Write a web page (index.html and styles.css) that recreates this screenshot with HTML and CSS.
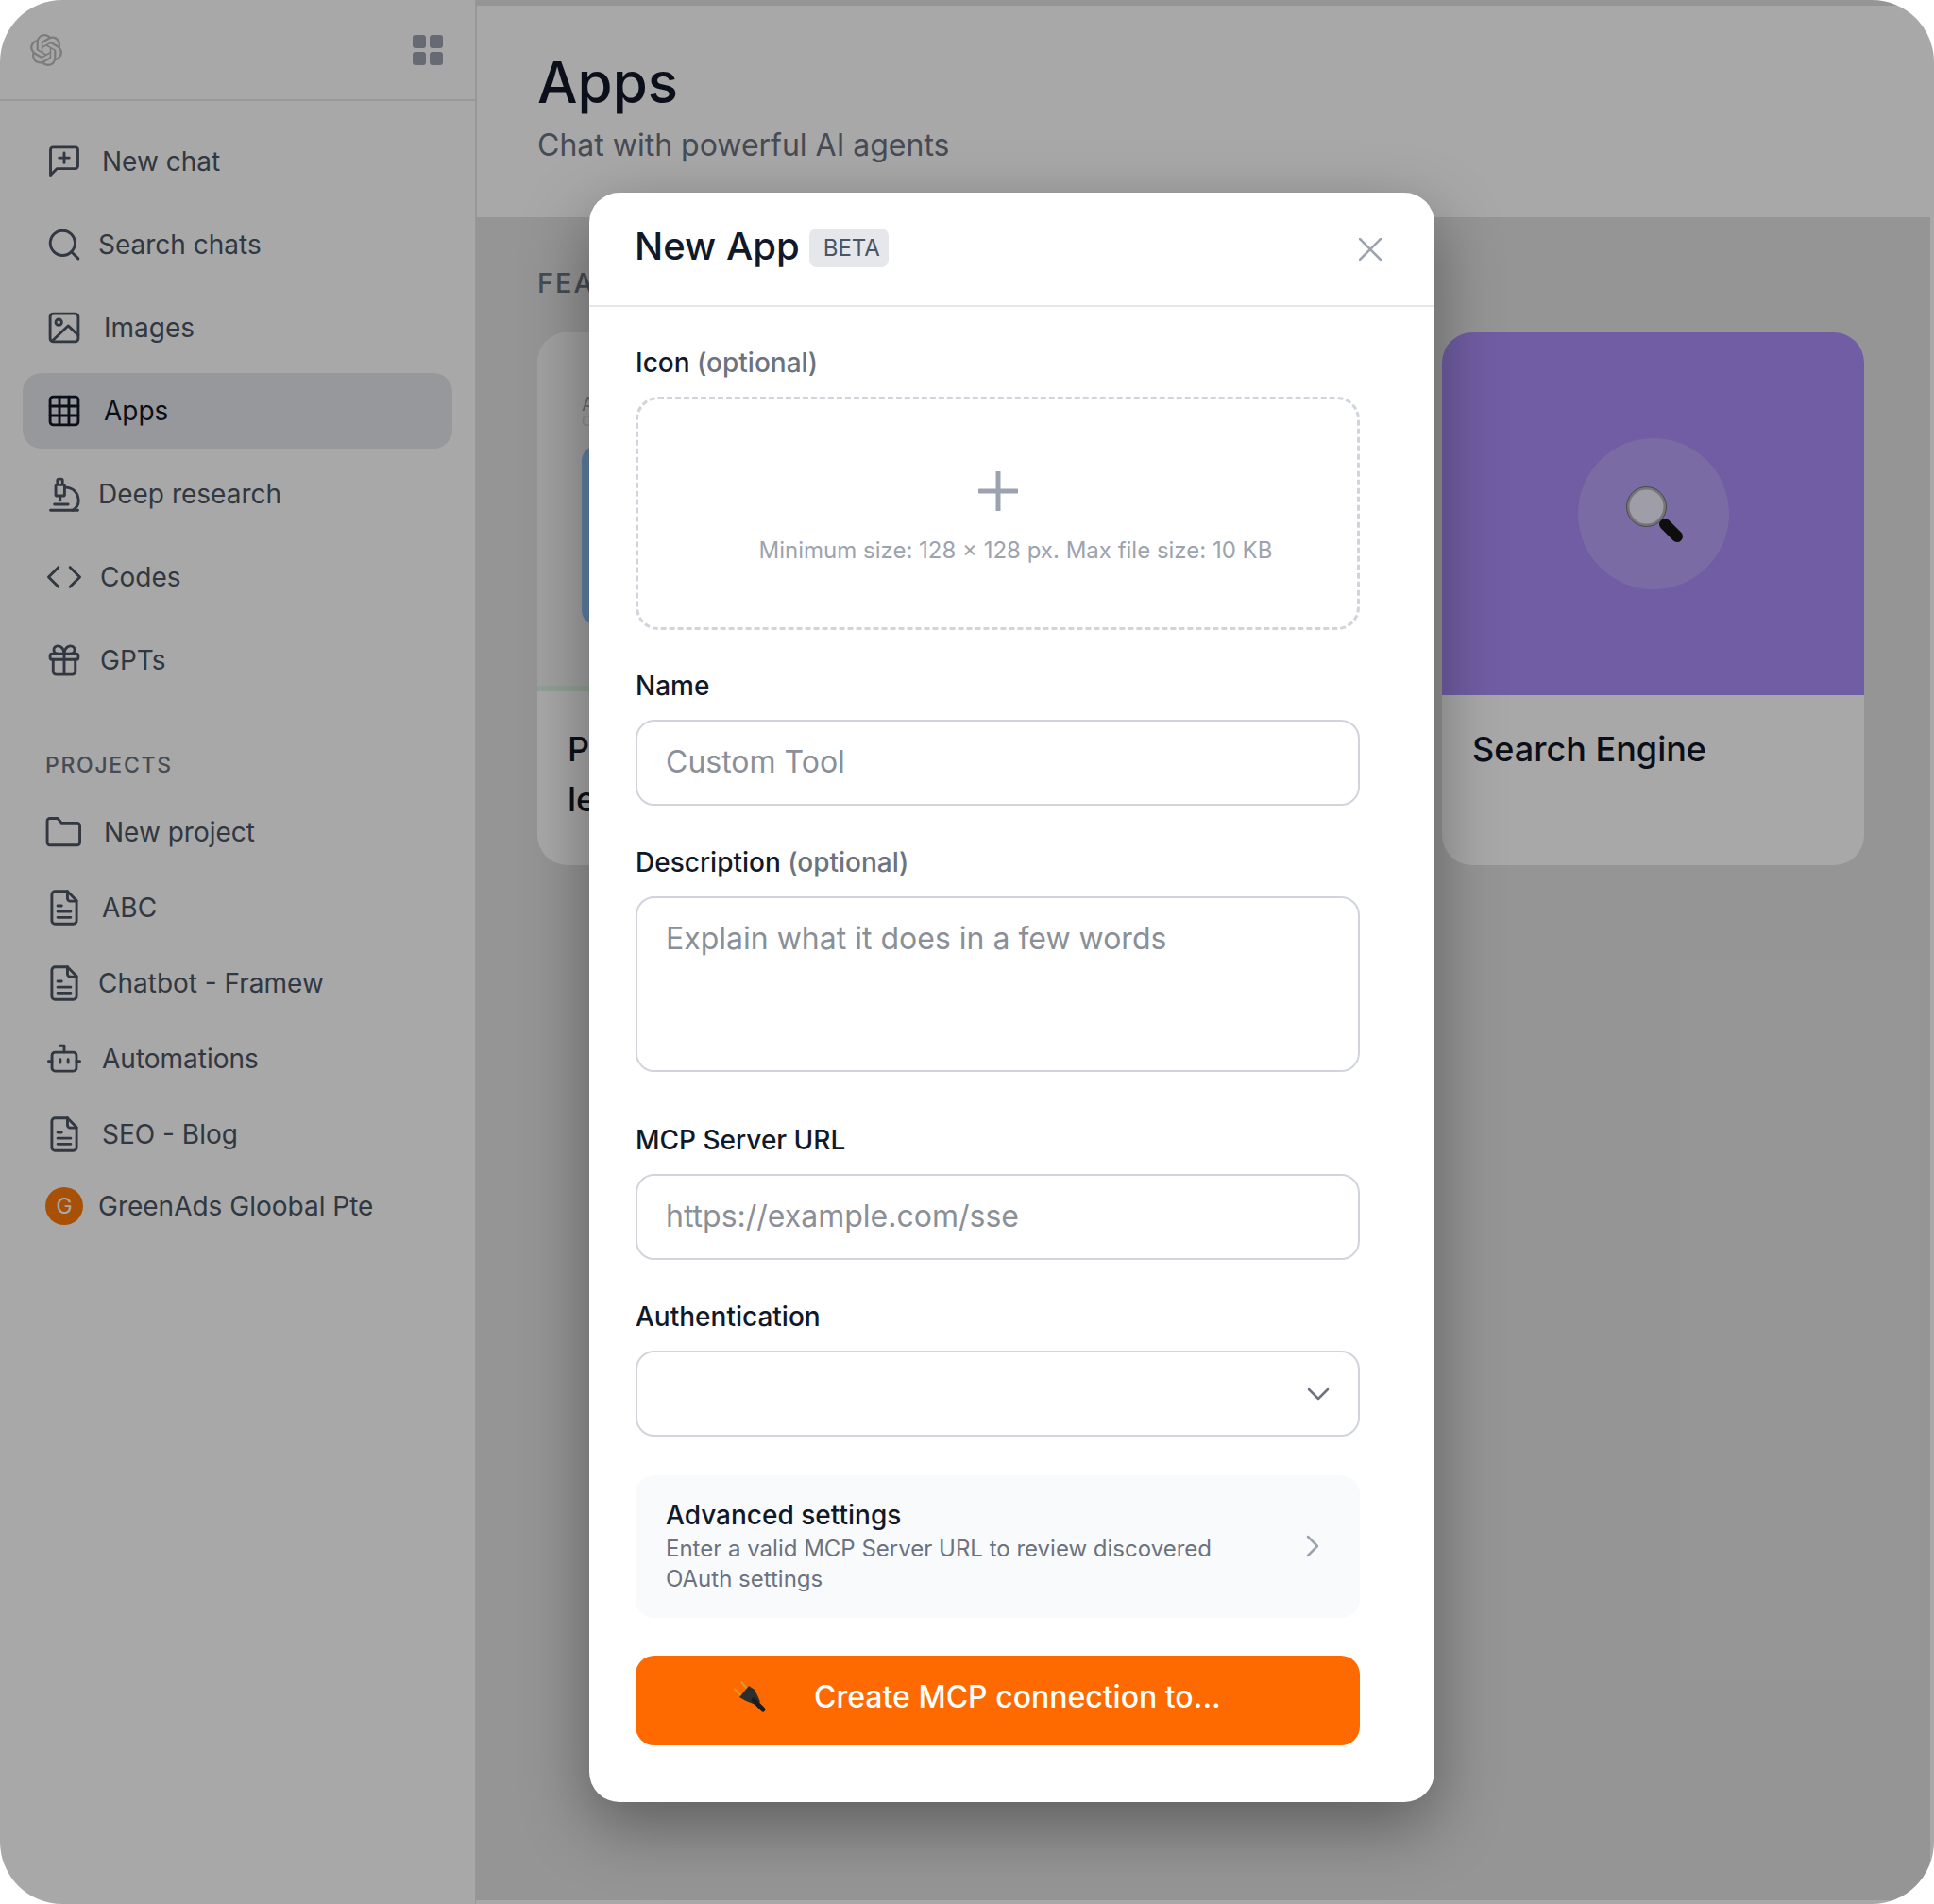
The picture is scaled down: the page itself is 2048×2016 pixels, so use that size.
FILE: index.html
```html
<!DOCTYPE html>
<html lang="en">
<head>
  <meta charset="UTF-8">
  <title>Apps</title>
  <link rel="stylesheet" href="styles.css">
</head>
<body>
  <div class="window">
    <aside class="sidebar">
      <div class="sidebar-head">
        <svg class="logo" viewBox="0 0 24 24"><path d="M22.282 9.821a5.985 5.985 0 0 0-.516-4.91 6.046 6.046 0 0 0-6.51-2.9A6.065 6.065 0 0 0 4.981 4.18a5.985 5.985 0 0 0-3.998 2.9 6.046 6.046 0 0 0 .743 7.097 5.98 5.98 0 0 0 .51 4.911 6.051 6.051 0 0 0 6.515 2.9A5.985 5.985 0 0 0 13.26 24a6.056 6.056 0 0 0 5.772-4.206 5.99 5.99 0 0 0 3.997-2.9 6.056 6.056 0 0 0-.747-7.073zM13.26 22.43a4.476 4.476 0 0 1-2.876-1.04l.141-.081 4.779-2.758a.795.795 0 0 0 .392-.681v-6.737l2.02 1.168a.071.071 0 0 1 .038.052v5.583a4.504 4.504 0 0 1-4.494 4.494zM3.6 18.304a4.47 4.47 0 0 1-.535-3.014l.142.085 4.783 2.759a.771.771 0 0 0 .78 0l5.843-3.369v2.332a.08.08 0 0 1-.033.062L9.74 19.95a4.5 4.5 0 0 1-6.14-1.646zM2.34 7.896a4.485 4.485 0 0 1 2.366-1.973V11.6a.766.766 0 0 0 .388.676l5.815 3.355-2.02 1.168a.076.076 0 0 1-.071 0l-4.83-2.786A4.504 4.504 0 0 1 2.34 7.872zm16.597 3.855l-5.833-3.387L15.119 7.2a.076.076 0 0 1 .071 0l4.83 2.791a4.494 4.494 0 0 1-.676 8.105v-5.678a.79.79 0 0 0-.407-.667zm2.01-3.023l-.141-.085-4.774-2.782a.776.776 0 0 0-.785 0L9.409 9.23V6.897a.066.066 0 0 1 .028-.061l4.83-2.787a4.5 4.5 0 0 1 6.68 4.66zm-12.64 4.135l-2.02-1.164a.08.08 0 0 1-.038-.057V6.075a4.5 4.5 0 0 1 7.375-3.453l-.142.08L8.704 5.46a.795.795 0 0 0-.393.681zm1.097-2.365l2.602-1.5 2.607 1.5v2.999l-2.597 1.5-2.607-1.5z"/></svg>
        <div class="layout-btn"><span></span><span></span><span></span><span></span></div>
      </div>

      <nav class="nav">
        <a class="nav-item">
          <svg class="icon" viewBox="-2.5 -2.5 29 29"><path d="M3.500 1h17a2 2 0 0 1 2 2v12.500a2 2 0 0 1-2 2H6.500l-5 5V3a2 2 0 0 1 2-2z"/><path d="M12 5.500v7.500M8.200 9.200h7.600"/></svg>
          <span class="label label-near">New chat</span>
        </a>
        <a class="nav-item">
          <svg class="icon" viewBox="-2.5 -2.5 29 29"><circle cx="10.8" cy="10.8" r="9.5"/><path d="M17.6 17.6l5.200 5.200"/></svg>
          <span class="label">Search chats</span>
        </a>
        <a class="nav-item">
          <svg class="icon" viewBox="-2.5 -2.5 29 29"><rect x="1.200" y="1.200" width="21.600" height="21.600" rx="2.500"/><circle cx="7.800" cy="7.800" r="2.300"/><path d="M3 22l12-11.500 7.800 7.200"/></svg>
          <span class="label label-wide">Images</span>
        </a>
        <a class="nav-item active">
          <svg class="icon" viewBox="-2.5 -2.5 29 29"><rect x="1.200" y="1.200" width="21.600" height="21.600" rx="2.500"/><path d="M1.200 8.400h21.600M1.200 15.600h21.600M8.400 1.200v21.600M15.600 1.200v21.600"/></svg>
          <span class="label label-wide">Apps</span>
        </a>
        <a class="nav-item">
          <svg class="icon" viewBox="-2.5 -2.5 29 29"><path d="M1.500 24.500h21M4.500 20h10.500"/><path d="M7.800.5h1.900a1 1 0 0 1 1 1V5H6.800V1.500a1 1 0 0 1 1-1zM6.500 5h4.800a1 1 0 0 1 1 1v6.500a1 1 0 0 1-1 1H6.500a1 1 0 0 1-1-1V6a1 1 0 0 1 1-1zM8.900 13.500V17"/><path d="M13 7c6 0 10 4.500 10 10.500 0 3-2 5.500-4.500 7"/></svg>
          <span class="label">Deep research</span>
        </a>
        <a class="nav-item">
          <svg class="icon" viewBox="-2.5 -2.5 29 29"><path d="M7.500 4.500L0 12l7.500 7.500M16.500 4.500L24 12l-7.500 7.500"/></svg>
          <span class="label label-mid">Codes</span>
        </a>
        <a class="nav-item">
          <svg class="icon" viewBox="-2.5 -2.5 29 29"><rect x="1.200" y="7" width="21.600" height="4.500" rx="1.500"/><path d="M12 7v16M20.500 11.500V20.500a2.500 2.500 0 0 1-2.500 2.500H6a2.500 2.500 0 0 1-2.500-2.500V11.500"/><path d="M7 7a3 3 0 0 1 0-6c3 0 5 3 5 6 0-3 2-6 5-6a3 3 0 0 1 0 6"/></svg>
          <span class="label label-mid">GPTs</span>
        </a>
      </nav>

      <div class="section-title">PROJECTS</div>

      <nav class="projects">
        <a class="nav-item">
          <svg class="icon" viewBox="-2.5 -2.5 29 29"><path d="M-1 3.500a2 2 0 0 1 2-2h6l3 3.500h12a2 2 0 0 1 2 2v13a2 2 0 0 1-2 2H1a2 2 0 0 1-2-2z"/></svg>
          <span class="label label-wide">New project</span>
        </a>
        <a class="nav-item">
          <svg class="icon" viewBox="-2.5 -2.500 29 29"><path d="M5-.5h9.500l7 7v15.500a2.500 2.500 0 0 1-2.500 2.500H5a2.500 2.500 0 0 1-2.500-2.500V2a2.500 2.500 0 0 1 2.500-2.500z"/><path d="M14.500-.5V5a2 2 0 0 0 2 2h5M7 10.500h3M7 15h10M7 19.500h10"/></svg>
          <span class="label label-near">ABC</span>
        </a>
        <a class="nav-item">
          <svg class="icon" viewBox="-2.5 -2.500 29 29"><path d="M5-.5h9.500l7 7v15.500a2.500 2.500 0 0 1-2.500 2.500H5a2.500 2.500 0 0 1-2.500-2.500V2a2.500 2.500 0 0 1 2.500-2.500z"/><path d="M14.500-.5V5a2 2 0 0 0 2 2h5M7 10.500h3M7 15h10M7 19.500h10"/></svg>
          <span class="label">Chatbot - Framew</span>
        </a>
        <a class="nav-item">
          <svg class="icon" viewBox="-2.5 -2.5 29 29"><rect x="2.600" y="7" width="18.800" height="14.500" rx="2.500"/><path d="M8.500 2h3.500v5M0 14h2.600M21.400 14H24M9 12.500v2.500M15 12.500v2.500"/></svg>
          <span class="label label-near">Automations</span>
        </a>
        <a class="nav-item">
          <svg class="icon" viewBox="-2.5 -2.500 29 29"><path d="M5-.5h9.500l7 7v15.500a2.500 2.500 0 0 1-2.500 2.500H5a2.500 2.500 0 0 1-2.500-2.500V2a2.500 2.500 0 0 1 2.500-2.500z"/><path d="M14.500-.5V5a2 2 0 0 0 2 2h5M7 10.500h3M7 15h10M7 19.500h10"/></svg>
          <span class="label label-near">SEO - Blog</span>
        </a>
        <a class="nav-item nav-item-short">
          <span class="avatar">G</span>
          <span class="label">GreenAds Gloobal Pte</span>
        </a>
      </nav>
    </aside>

    <main class="main">
      <header class="page-head">
        <h1>Apps</h1>
        <p>Chat with powerful AI agents</p>
      </header>
      <section class="content">
        <h2>FEATURED</h2>
        <div class="cards">
          <div class="card">
            <div class="card-top card-top-green">
              <div class="mini-title">Agents</div>
              <div class="mini-sub">Custom</div>
              <div class="mini-block"></div>
            </div>
            <div class="card-name">Project<br>lead</div>
          </div>
          <div class="card"></div>
          <div class="card">
            <div class="card-top card-top-purple">
              <div class="card-circle">
                <svg class="lens" viewBox="0 0 80 80">
                  <path class="lens-handle" d="M52 51l13 13"/>
                  <circle class="lens-glass" cx="32.500" cy="32.500" r="19.500"/>
                  <circle class="lens-rim" cx="32.500" cy="32.500" r="21"/>
                </svg>
              </div>
            </div>
            <div class="card-name">Search Engine</div>
          </div>
        </div>
      </section>
    </main>

    <div class="scrim">
      <div class="modal">
        <div class="modal-head">
          <span class="modal-title">New App</span>
          <span class="badge">BETA</span>
          <svg class="close" viewBox="0 0 24 24"><path d="M1 1l22 22M23 1L1 23"/></svg>
        </div>
        <div class="modal-body">
          <div class="field field-drop">
            <label>Icon <span class="muted">(optional)</span></label>
            <div class="dropzone">
              <svg class="plus" viewBox="0 0 42 42"><path d="M21 1v40M1 21h40"/></svg>
              <span class="hint">Minimum size: 128 × 128 px. Max file size: 10 KB</span>
            </div>
          </div>
          <div class="field">
            <label>Name</label>
            <input class="input" type="text" placeholder="Custom Tool">
          </div>
          <div class="field field-wide">
            <label>Description <span class="muted">(optional)</span></label>
            <div class="input textarea">Explain what it does in a few words</div>
          </div>
          <div class="field">
            <label>MCP Server URL</label>
            <input class="input" type="text" placeholder="https://example.com/sse">
          </div>
          <div class="field">
            <label>Authentication</label>
            <div class="input select">
              <svg class="chevron" viewBox="0 0 24 24"><path d="M2 7l10 10 10-10"/></svg>
            </div>
          </div>
          <div class="advanced">
            <div>
              <div class="advanced-title">Advanced settings</div>
              <div class="advanced-desc">Enter a valid MCP Server URL to review discovered<br>OAuth settings</div>
            </div>
            <svg class="chevron-right" viewBox="0 0 14 24"><path d="M2 2l10 10L2 22"/></svg>
          </div>
          <button class="create-btn">
            <svg class="plug" viewBox="0 0 40 40">
              <path class="plug-prong" d="M10 4l7 8M2.500 11l8 8"/>
              <path class="plug-body" d="M18 8l6 4 4 8 2 5-5 3-10-4-7-4z"/>
              <path class="plug-tail" d="M23 23l10 10"/>
            </svg>
            <span>Create MCP connection to...</span>
          </button>
        </div>
      </div>
    </div>
  </div>
</body>
</html>
```

FILE: styles.css
```css
* {
  box-sizing: border-box;
}

body {
  margin: 0;
  background: #ffffff;
  font-family: Inter, "Noto Sans", sans-serif;
  color: #111827;
}

.window {
  position: relative;
  display: flex;
  width: 2048px;
  height: 2016px;
  overflow: hidden;
  border-radius: 66px;
  background: #ffffff;
}

/* Sidebar */
.sidebar {
  width: 504px;
  flex-shrink: 0;
  padding-right: 24px;
  border-right: 1px solid #e5e7eb;
}

.sidebar-head {
  display: flex;
  align-items: center;
  justify-content: space-between;
  height: 107px;
  margin-right: -24px;
  padding: 0 34px 0 32px;
  border-bottom: 2px solid #e5e7eb;
}

.logo {
  width: 34px;
  height: 34px;
  fill: #bcbcbc;
}

.layout-btn {
  display: grid;
  grid-template-columns: 14px 14px;
  grid-template-rows: 14px 14px;
  gap: 4px;
}

.layout-btn span {
  border-radius: 3px;
  background: #9ca3af;
}

.nav {
  display: flex;
  flex-direction: column;
  gap: 8px;
  padding: 24px 0 0 24px;
}

.projects {
  display: flex;
  flex-direction: column;
  padding-left: 24px;
}

.nav-item {
  display: flex;
  align-items: center;
  height: 80px;
  padding-left: 24px;
  border-radius: 20px;
  font-size: 28px;
  color: #4b5563;
}

.nav-item-short {
  height: 72px;
}

.nav-item.active {
  background: #e5e7eb;
  color: #111827;
}

.icon {
  width: 40px;
  height: 40px;
  flex-shrink: 0;
  overflow: visible;
  fill: none;
  stroke: currentColor;
  stroke-width: 2.100;
  stroke-linecap: round;
  stroke-linejoin: round;
}

.label {
  margin-left: 16px;
}

.label-mid {
  margin-left: 18px;
}

.label-near {
  margin-left: 20px;
}

.label-wide {
  margin-left: 22px;
}

.avatar {
  display: flex;
  align-items: center;
  justify-content: center;
  width: 40px;
  height: 40px;
  flex-shrink: 0;
  border-radius: 50%;
  background: #ff7a08;
  color: #ffffff;
  font-size: 23px;
}

.section-title {
  margin: 55px 0 15px 48px;
  font-size: 23px;
  line-height: 32px;
  font-weight: 500;
  letter-spacing: 1.700px;
  color: #6b7280;
}

/* Main column */
.main {
  display: flex;
  flex-direction: column;
  flex: 1;
  margin: 0 4px 4px 0;
  padding: 6px 0 0 1px;
  background: #e3e3e3;
}

.page-head {
  height: 224px;
  padding: 45px 0 0 64px;
  background: #ffffff;
}

.page-head h1 {
  margin: 0;
  font-size: 60px;
  line-height: 72px;
  font-weight: 500;
  color: #111827;
}

.page-head p {
  margin: 9px 0 0;
  font-size: 32px;
  line-height: 44px;
  color: #6b7280;
}

.content {
  padding: 49px 0 0 64px;
}

.content h2 {
  margin: 0 0 31px;
  font-size: 29px;
  line-height: 42px;
  font-weight: 500;
  letter-spacing: 2px;
  color: #6b7280;
}

.cards {
  display: grid;
  grid-template-columns: repeat(3, 447px);
  gap: 32px;
}

.card {
  height: 564px;
  overflow: hidden;
  border-radius: 32px;
  background: #ffffff;
}

.card-top {
  height: 384px;
}

.card-top-green {
  height: 380px;
  margin-bottom: 4px;
  padding: 66px 0 0 47px;
  border-bottom: 6px solid #dcf5e3;
  background: #f4f4f4;
}

.mini-title {
  font-size: 20px;
  line-height: 20px;
  color: #9ca3af;
}

.mini-sub {
  font-size: 14px;
  line-height: 16px;
  color: #d1d5db;
}

.mini-block {
  width: 300px;
  height: 190px;
  margin-top: 18px;
  border-radius: 16px;
  background: #93c5fd;
}

.card-top-purple {
  display: flex;
  align-items: center;
  justify-content: center;
  background: #aa8df8;
}

.card-circle {
  display: flex;
  align-items: center;
  justify-content: center;
  width: 160px;
  height: 160px;
  border-radius: 50%;
  background: rgba(255, 255, 255, 0.2);
}

.lens {
  width: 80px;
  height: 80px;
}

.lens-handle {
  fill: none;
  stroke: #161616;
  stroke-width: 12;
  stroke-linecap: round;
}

.lens-glass {
  fill: #f2eeff;
  stroke: #b4b4b4;
  stroke-width: 3;
}

.lens-rim {
  fill: none;
  stroke: #6e6e6e;
  stroke-width: 1;
}

.card-name {
  padding: 31px 32px 0;
  font-size: 36px;
  line-height: 53px;
  font-weight: 500;
  color: #111827;
}

/* Modal */
.scrim {
  position: absolute;
  inset: 0;
  background: rgba(0, 0, 0, 0.34);
}

.modal {
  position: absolute;
  left: 624px;
  top: 204px;
  width: 895px;
  height: 1704px;
  border-radius: 32px;
  background: #ffffff;
  box-shadow: 0 24px 70px rgba(0, 0, 0, 0.38);
}

.modal-head {
  display: flex;
  align-items: center;
  height: 121px;
  padding: 0 56px 6px 48px;
  border-bottom: 2px solid #e5e7eb;
}

.modal-title {
  font-size: 40px;
  font-weight: 500;
  color: #111827;
}

.badge {
  margin: 4px 0 0 10px;
  padding: 6px 9px 5px 15px;
  border-radius: 8px;
  background: #e5e7eb;
  font-size: 24px;
  line-height: 30px;
  color: #4b5563;
}

.close {
  width: 24px;
  height: 24px;
  margin: 6px 0 0 auto;
  fill: none;
  stroke: #9ca3af;
  stroke-width: 2.500;
  stroke-linecap: round;
}

.modal-body {
  padding: 41px 79px 0 49px;
}

.field {
  margin-bottom: 42px;
}

.field-drop {
  margin-bottom: 41px;
}

.field-wide {
  margin-bottom: 54px;
}

.field label {
  display: block;
  margin-bottom: 18px;
  font-size: 28px;
  line-height: 36px;
  font-weight: 500;
  color: #111827;
}

.muted {
  color: #6b7280;
}

.dropzone {
  display: flex;
  flex-direction: column;
  align-items: center;
  height: 247px;
  padding-top: 76px;
  border: 3px dashed #d1d5db;
  border-radius: 24px;
}

.plus {
  width: 42px;
  height: 42px;
  fill: none;
  stroke: #9ca3af;
  stroke-width: 5;
  stroke-linecap: round;
}

.hint {
  margin-top: 27px;
  padding-left: 38px;
  font-size: 24px;
  line-height: 30px;
  color: #9ca3af;
}

.input {
  display: block;
  width: 100%;
  height: 91px;
  padding: 0 30px 3px;
  border: 2px solid #d1d5db;
  border-radius: 20px;
  background: #ffffff;
  font-family: Inter, "Noto Sans", sans-serif;
  font-size: 32px;
  outline: none;
}

.input::placeholder {
  color: #8b8f97;
  opacity: 1;
}

.textarea {
  height: 186px;
  padding-top: 20px;
  line-height: 46px;
  color: #8b8f97;
}

.select {
  display: flex;
  align-items: center;
  justify-content: flex-end;
  padding-right: 30px;
  padding-bottom: 0;
}

.chevron {
  width: 24px;
  height: 24px;
  fill: none;
  stroke: #6b7280;
  stroke-width: 2.500;
  stroke-linecap: round;
  stroke-linejoin: round;
}

.advanced {
  display: flex;
  align-items: center;
  justify-content: space-between;
  height: 151px;
  margin-top: -1px;
  padding: 0 43px 2px 32px;
  border-radius: 20px;
  background: #f9fafb;
}

.advanced-title {
  margin-bottom: 1px;
  font-size: 28px;
  line-height: 38px;
  font-weight: 500;
  color: #111827;
}

.advanced-desc {
  font-size: 24px;
  line-height: 32px;
  color: #6b7280;
}

.chevron-right {
  width: 14px;
  height: 24px;
  fill: none;
  stroke: #9ca3af;
  stroke-width: 2.500;
  stroke-linecap: round;
  stroke-linejoin: round;
}

.create-btn {
  display: flex;
  align-items: center;
  width: 100%;
  height: 95px;
  margin-top: 40px;
  padding: 0 0 8px 102px;
  border: none;
  border-radius: 20px;
  background: #ff6a00;
  font-family: Inter, "Noto Sans", sans-serif;
  font-size: 32px;
  font-weight: 500;
  color: #ffffff;
}

.plug {
  width: 40px;
  height: 40px;
  margin-right: 47px;
  flex-shrink: 0;
}

.plug-prong {
  fill: none;
  stroke: #c9a227;
  stroke-width: 2;
}

.plug-body {
  fill: #2e2e2e;
}

.plug-tail {
  fill: none;
  stroke: #1c1c1c;
  stroke-width: 5;
  stroke-linecap: round;
}
```
